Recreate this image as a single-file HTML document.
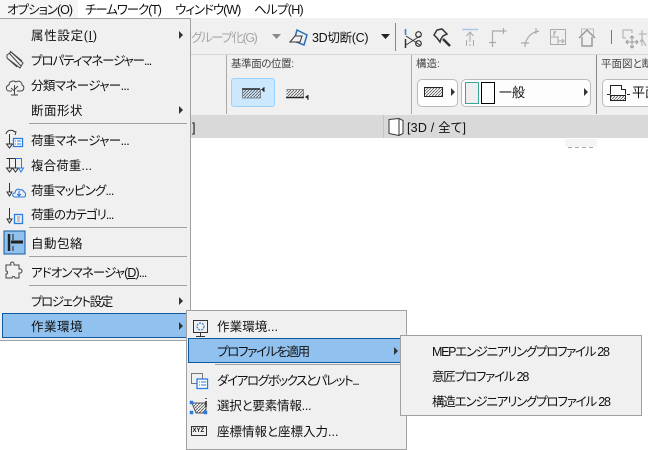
<!DOCTYPE html>
<html lang="ja"><head><meta charset="utf-8"><style>
html,body{margin:0;padding:0}
body{width:648px;height:441px;position:relative;overflow:hidden;background:#fff;font-family:"Liberation Sans","Noto Sans CJK JP",sans-serif;font-size:12.5px;color:#111;font-feature-settings:"palt"}
.t{position:absolute;white-space:nowrap;line-height:16px;height:16px;transform:translateY(-7px)}
.a{position:absolute;left:0;top:0}
.b{position:absolute;box-sizing:border-box}
.m{position:absolute;box-sizing:border-box;background:#f0f0f0;border:1px solid #a0a0a0}
.h{position:absolute;box-sizing:border-box;background:#91c1ee;border:1px solid #0f5a9c}
.s{position:absolute;height:1px;background:#a0a0a0}
u{text-decoration:underline}
</style></head><body>
<div class="b" style="left:0;top:0;width:78px;height:18px;background:#f5f5f5"></div>
<div class="t" style="left:7px;top:9px;letter-spacing:-1px">オプション(O)</div>
<div class="t" style="left:85px;top:9px;letter-spacing:-1.1px">チームワーク(T)</div>
<div class="t" style="left:175px;top:9px;letter-spacing:-1px">ウィンドウ(W)</div>
<div class="t" style="left:254px;top:9px;letter-spacing:-.7px">ヘルプ(H)</div>

<div class="b" style="left:0;top:18px;width:648px;height:97px;background:#f0f0f0"></div>
<div class="b" style="left:0;top:54px;width:648px;height:1px;background:#d6d6d6"></div>
<div class="b" style="left:0;top:115px;width:648px;height:23px;background:#d9d9d9"></div>
<div class="b" style="left:383px;top:115px;width:1px;height:23px;background:#c4c4c4"></div>
<div class="b" style="left:565px;top:139px;width:32px;height:8px;background:#f5f5f5"></div>
<div class="b" style="left:568px;top:147px;width:4px;height:1px;background:#aaa"></div>
<div class="b" style="left:575px;top:147px;width:4px;height:1px;background:#aaa"></div>
<div class="b" style="left:582px;top:147px;width:4px;height:1px;background:#aaa"></div>
<div class="b" style="left:589px;top:147px;width:4px;height:1px;background:#aaa"></div>
<div class="b" style="left:226px;top:55px;width:1px;height:59px;background:#aaa"></div>
<div class="b" style="left:411px;top:55px;width:1px;height:59px;background:#aaa"></div>
<div class="b" style="left:596px;top:55px;width:1px;height:59px;background:#888"></div>
<div class="b" style="left:231px;top:78px;width:44px;height:29px;background:#cce8ff;border:1px solid #99d1ff;border-radius:3px"></div>
<div class="b" style="left:417px;top:79px;width:41px;height:28px;background:#fdfdfd;border:1px solid #bbb;border-radius:5px"></div>
<div class="b" style="left:461px;top:79px;width:130px;height:28px;background:#fdfdfd;border:1px solid #bbb;border-radius:5px"></div>
<div class="b" style="left:602px;top:79px;width:60px;height:28px;background:#fdfdfd;border:1px solid #bbb;border-radius:5px"></div>

<div class="t" style="left:191px;top:37px;color:#a6a6a6;letter-spacing:-1.4px">グループ化(G)</div>
<div class="t" style="left:312px;top:37px;letter-spacing:-.3px">3D切断(C)</div>
<div class="t" style="left:231px;top:63px;font-size:10.5px;color:#444;letter-spacing:-.4px">基準面の位置:</div>
<div class="t" style="left:416px;top:63px;font-size:10.5px;color:#444">構造:</div>
<div class="t" style="left:601px;top:63px;font-size:10.5px;color:#444">平面図と断</div>
<div class="t" style="left:499px;top:92px;font-size:13px">一般</div>
<div class="t" style="left:632px;top:92px;font-size:13px">平面</div>
<div class="t" style="left:192px;top:127px">]</div>
<div class="t" style="left:407px;top:127px;letter-spacing:.2px">[3D / 全て]</div>

<svg class="a" width="648" height="441" fill="none" stroke-width="1">
<defs><pattern id="d" width="3" height="3" patternUnits="userSpaceOnUse"><path d="M0 3L3 0" stroke="#555" stroke-width=".8"/></pattern></defs>
<path d="M272 34h9l-4.500 5z" fill="#8a8a8a"/>
<path d="M381 34h9l-4.500 5z" fill="#222"/>
<path d="M395.500 23v28" stroke="#888"/>
<path d="M297 30l10 5-3 10-10-4z" stroke="#2a6fb5" stroke-width="1.500"/>
<path d="M290 42l5-6h7l-2 6z" stroke="#333" fill="#f0f0f0"/>
<path d="M405.500 29v6" stroke="#2a7ce0" stroke-width="1.500"/><path d="M405.500 39v9" stroke="#333" stroke-width="1.500"/>
<path d="M406 36l14 9M406 45l14-9" stroke="#333"/><circle cx="418.500" cy="34.500" r="2.800" stroke="#333" stroke-width="1.200"/><circle cx="418.500" cy="43.500" r="2.800" stroke="#333" stroke-width="1.200"/>
<path d="M434 35l3-5 5-1 5 5-4 2-2 3-1 3-3-4z" stroke="#333" stroke-width="1.500"/><path d="M443 39l7 7" stroke="#333" stroke-width="2.500"/>
<path d="M462 29.500h16" stroke="#a9c6ea" stroke-width="1.500"/><path d="M470 32v10M466.500 36l3.500-4 3.500 4M466.500 40v6M470 44v2M473.500 40v6" stroke="#aaa"/>
<path d="M492.500 47v-16h14M489 42.500h7M503.500 28v6" stroke="#aaa" stroke-width="1.200"/>
<path d="M525 47c0-8 6-15 14-16M521 43h8M536 28v6" stroke="#aaa" stroke-width="1.200"/>
<rect x="550.500" y="29.500" width="15" height="15" stroke="#aaa"/><path d="M550 37h8v8M556 31l-2 3M558 41h6M562 39l2 2-2 2M554 31v5" stroke="#aaa"/>
<path d="M581.500 36v-7h12v7" stroke="#bbb"/><path d="M579 38l8-8 8 8M582 37v9h10v-9" stroke="#999" stroke-width="1.500"/>
<path d="M611.500 30v14" stroke="#777"/>
<path d="M623 38v-8h9v3M623 38h3" stroke="#aaa"/><path d="M632 36v12M626 42h12M630 38l2-2 2 2M630 46l2 2 2-2M628 40l-2 2 2 2M636 40l2 2-2 2" stroke="#999"/>
<path d="M642 30v16M639 34h8M640 42l2-3 4 7" stroke="#aaa"/>
<rect x="242.500" y="89.500" width="18" height="8" fill="url(#d)" stroke="none"/><path d="M242 89h18" stroke="#222" stroke-width="1.500"/><path d="M242.500 89v9h18v-9" stroke="#666" stroke-width=".7"/><path d="M261 89.500l3-2v4z" fill="#222"/><path d="M264 87v5" stroke="#222"/>
<rect x="286.500" y="89.500" width="17" height="7" fill="url(#d)" stroke="none"/><path d="M286 97.500h18" stroke="#222" stroke-width="1.500"/><path d="M286.500 89.500h17v8" stroke="#666" stroke-width=".7"/><path d="M305 97l3-2v4z" fill="#222"/><path d="M308 95v5" stroke="#222"/>
<rect x="424.500" y="87.500" width="18" height="9" fill="url(#d)" stroke="#222"/><path d="M451 88l4 4-4 4z" fill="#333"/>
<rect x="465.500" y="82.500" width="13" height="21" fill="#eee" stroke="#3aa796"/><rect x="481.500" y="82.500" width="13" height="21" fill="#fff" stroke="#000"/><path d="M584 88l4 4-4 4z" fill="#333"/>
<path d="M610.500 94.500v-9h11v4h4v5" stroke="#222"/><path d="M607 94.500h3M627 94.500h3" stroke="#222"/><rect x="610.500" y="95.500" width="15" height="5" fill="url(#d)" stroke="#222"/>
<path d="M389 119.500l10-1 4 2v13l-4 2-10-2z" stroke="#333" fill="#fff"/><path d="M399 118.500v17" stroke="#333"/>
</svg>

<!-- main menu -->
<div class="m" style="left:-2px;top:18px;width:193px;height:323px"></div>
<div class="h" style="left:2px;top:313px;width:186px;height:25px"></div>
<div class="s" style="left:29px;top:123px;width:158px"></div>
<div class="s" style="left:29px;top:227px;width:158px"></div>
<div class="s" style="left:29px;top:256px;width:158px"></div>
<div class="s" style="left:29px;top:285px;width:158px"></div>
<div class="t" style="left:31px;top:35px;letter-spacing:.7px">属性設定(<u>I</u>)</div>
<div class="t" style="left:31px;top:60px;letter-spacing:-1.1px">プロパティマネージャー...</div>
<div class="t" style="left:31px;top:85px;letter-spacing:-.6px">分類マネージャー...</div>
<div class="t" style="left:31px;top:110px;letter-spacing:.5px">断面形状</div>
<div class="t" style="left:31px;top:140px;letter-spacing:-.6px">荷重マネージャー...</div>
<div class="t" style="left:31px;top:165px;letter-spacing:.1px">複合荷重...</div>
<div class="t" style="left:31px;top:190px;letter-spacing:-.8px">荷重マッピング...</div>
<div class="t" style="left:31px;top:214px;letter-spacing:-1px">荷重のカテゴリ...</div>
<div class="t" style="left:31px;top:243px;letter-spacing:.5px">自動包絡</div>
<div class="t" style="left:31px;top:272px;letter-spacing:-.9px">アドオンマネージャ(<u>D</u>)...</div>
<div class="t" style="left:31px;top:301px;letter-spacing:-1.4px">プロジェクト設定</div>
<div class="t" style="left:31px;top:326px;letter-spacing:.5px">作業環境</div>

<svg class="a" width="648" height="441" fill="none">
<path d="M179 31l4 4-4 4zM179 106l4 4-4 4zM179 297l4 4-4 4zM179 322l4 4-4 4z" fill="#333"/>
<g stroke="#444"><path d="M7 55l4-3 12 11-3 5-13-10zM9 53l12 13M10 51l12 10M7 58l10 9"/></g>
<path d="M12 91h-3c-3 0-4-5 0-6 0-4 5-5 7-3 3-2 6 0 6 3 3 1 2 6-1 6h-4M14.500 95v-10M11 88l3.500 3M18 86l-3.500 3.500M11 95h7" stroke="#444"/>
<g stroke="#333"><path d="M9.500 144v-10M6 134c1-4 6-5 9-2M13 131l3 1-1 3"/><path d="M6.500 144h6l-3 4z"/></g>
<rect x="13.500" y="138.500" width="9" height="8" fill="#fff" stroke="#2a7ce0" stroke-width="1.300"/><path d="M15 141h1M17 141h4M15 144h1M17 144h4" stroke="#2a7ce0"/>
<g stroke="#333"><path d="M6.500 158.500h9M9.500 158v10M15.500 158v10"/><path d="M6.500 168h6l-3 4zM12.500 168h6l-3 4z"/></g>
<path d="M15.500 158.500h6v10" stroke="#2a7ce0"/><path d="M18.500 168h5l-2.500 4z" stroke="#2a7ce0"/>
<g stroke="#333"><path d="M9.500 183v9"/><path d="M7 192h5l-2.500 4z"/></g>
<path d="M15 197c-3 0-3-4 0-4 0-3 3-5 5-3 2-1 4 1 4 2 2 0 2 5 0 5zM19 191v6M17 194l2 2 2-2" stroke="#2a7ce0" stroke-width="1.100"/>
<g stroke="#333"><path d="M9.500 208v11"/><path d="M7 219h5l-2.500 4z"/></g>
<rect x="14.500" y="214.500" width="8" height="9" stroke="#2a7ce0" stroke-width="1.300"/><path d="M17 217h3M17 219h3M17 221h3" stroke="#999"/>
<rect x="4" y="231" width="21" height="23" fill="#91c1ee" stroke="#0f5a9c"/>
<path d="M9 234v17" stroke="#222" stroke-width="2.500"/><path d="M11 242h12" stroke="#222" stroke-width="3"/><path d="M13 234v6M13 246v5" stroke="#222"/>
<path d="M6 265h5c-2-4 4-4 3 0h5v4c4-1 4 5 0 4v5h-4c0-2-3-2-3 0H6v-4c2 0 2-3 0-3z" stroke="#444"/>
</svg>

<!-- submenu 1 -->
<div class="m" style="left:186px;top:310px;width:221px;height:140px"></div>
<div class="h" style="left:188px;top:338px;width:214px;height:25px"></div>
<div class="s" style="left:215px;top:364px;width:188px"></div>
<div class="t" style="left:217px;top:326px;letter-spacing:.1px">作業環境...</div>
<div class="t" style="left:217px;top:351px;letter-spacing:-1.3px">プロファイルを適用</div>
<div class="t" style="left:217px;top:380px;letter-spacing:-1.4px">ダイアログボックスとパレット...</div>
<div class="t" style="left:217px;top:405px;letter-spacing:-.2px">選択と要素情報...</div>
<div class="t" style="left:217px;top:431px">座標情報と座標入力...</div>
<svg class="a" width="648" height="441" fill="none">
<path d="M394 347l4 4-4 4z" fill="#333"/>
<rect x="193.500" y="320.500" width="14" height="12" stroke="#333"/><path d="M200.500 333v3M196 336.500h9" stroke="#333"/>
<circle cx="200.500" cy="326.500" r="3.500" stroke="#2a7ce0" stroke-dasharray="2 1" stroke-width="1.200"/>
<rect x="191.500" y="373.500" width="11" height="10" stroke="#777"/><rect x="197" y="379" width="10.500" height="9.500" fill="#fff" stroke="#2a7ce0" stroke-width="1.300"/><path d="M199 382h1M201 382h5M199 385h1M201 385h5" stroke="#2a7ce0"/>
<path d="M192 403h14v10h-10z" fill="url(#d)" stroke="#555"/><path d="M190 401h3v3h-3zM190 411h3v3h-3zM204 411h3v3h-3z" fill="#2a7ce0" stroke="#2a7ce0" stroke-width=".5"/><path d="M206 398v1M206 401v6" stroke="#222" stroke-width="1.500"/>
<rect x="191.500" y="426.500" width="15" height="9" stroke="#333"/>
</svg>
<div class="t" style="left:192.500px;top:431px;font-size:6px;font-weight:bold;transform:translateY(-8px)">XYZ</div>

<!-- submenu 2 -->
<div class="m" style="left:400px;top:335px;width:242px;height:81px"></div>
<div class="t" style="left:432px;top:351px;letter-spacing:-1.3px">MEPエンジニアリングプロファイル 28</div>
<div class="t" style="left:432px;top:376px;letter-spacing:-1.2px">意匠プロファイル 28</div>
<div class="t" style="left:432px;top:401px;letter-spacing:-1.2px">構造エンジニアリングプロファイル 28</div>
</body></html>
